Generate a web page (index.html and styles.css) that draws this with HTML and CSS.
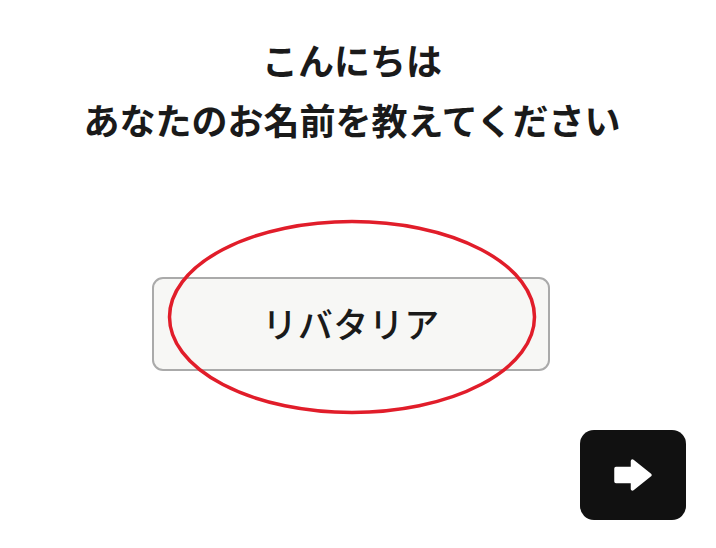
FILE: index.html
```html
<!DOCTYPE html>
<html lang="ja">
<head>
    <meta charset="UTF-8">
    <meta name="viewport" content="width=device-width, initial-scale=1.0">
    <title>お名前</title>
    <link rel="stylesheet" href="styles.css">
</head>
<body>

<div class="screen">
    <div class="greeting">
        <h2>こんにちは</h2>
        <h2>あなたのお名前を教えてください</h2>
    </div>

    <div class="choice">
        <button class="name-btn">リバタリア</button>
        <svg class="circle-mark" width="372" height="198" viewBox="0 0 372 198">
            <ellipse cx="186" cy="99" rx="182.5" ry="95.5" fill="none" stroke="#e11d2a" stroke-width="3.5"/>
        </svg>
    </div>

    <div class="footer">
        <button class="next-btn" aria-label="次へ">
            <svg width="40" height="34" viewBox="0 0 40 34">
                <path d="M3 10.5 H19.5 V3 L37 17 L19.5 31 V23.5 H3 Z" fill="#fff" stroke="#fff" stroke-width="3.5" stroke-linejoin="round"/>
            </svg>
        </button>
    </div>
</div>

</body>
</html>
```

FILE: styles.css
```css
body {
    margin: 0;
    background-color: #ffffff;
    font-family: "Noto Sans CJK JP", "Noto Sans", sans-serif;
    color: #1a1a1a;
}
.screen {
    width: 716px;
    height: 548px;
    display: flex;
    flex-direction: column;
    overflow: hidden;
}
.greeting {
    padding-top: 29px;
    padding-right: 12px;
    text-align: center;
}
.greeting h2 {
    margin: 0;
    font-size: 36px;
    font-weight: 700;
    line-height: 60px;
}
.choice {
    position: relative;
    align-self: flex-start;
    margin-top: 128px;
    margin-left: 152px;
}
.name-btn {
    display: block;
    width: 398px;
    height: 94px;
    background-color: #f7f7f5;
    border: 2px solid #aaaaaa;
    border-radius: 11px;
    font-family: inherit;
    font-size: 35px;
    font-weight: 500;
    color: #1a1a1a;
    letter-spacing: 0.5px;
    padding: 0 0 4px 0;
}
.circle-mark {
    position: absolute;
    left: 14px;
    top: -59px;
    pointer-events: none;
}
.footer {
    display: flex;
    justify-content: flex-end;
    padding-right: 30px;
    margin-top: 59px;
}
.next-btn {
    width: 106px;
    height: 90px;
    background-color: #111111;
    border: none;
    border-radius: 14px;
    display: flex;
    justify-content: center;
    align-items: center;
    padding: 0;
    cursor: pointer;
}
```
